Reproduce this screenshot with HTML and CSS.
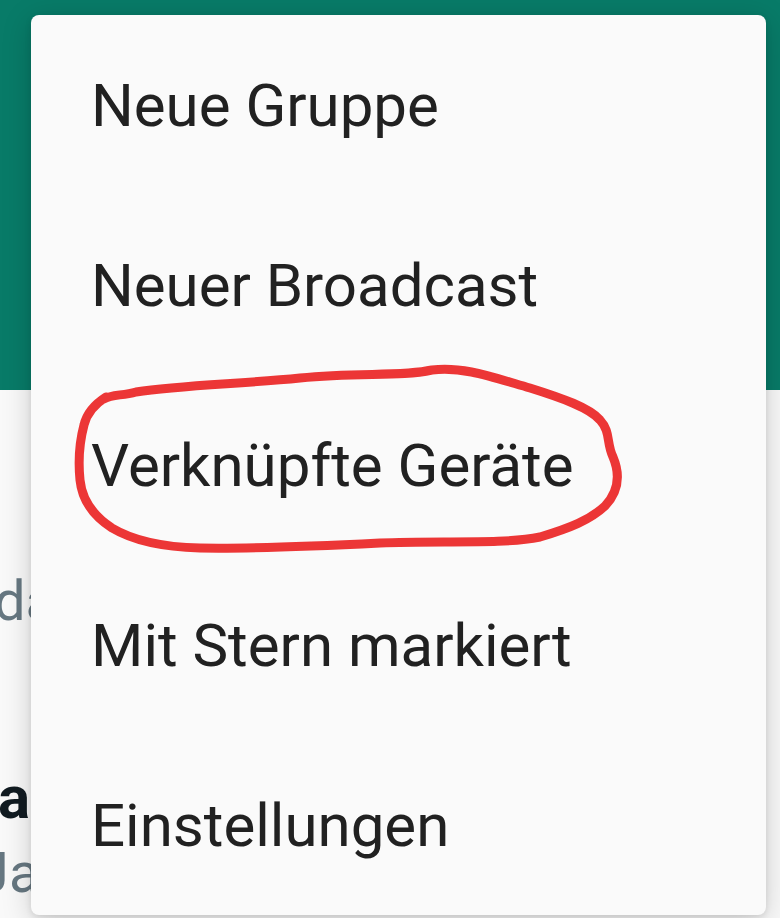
FILE: index.html
```html
<!DOCTYPE html>
<html lang="de">
<head>
<meta charset="utf-8">
<title>Menü</title>
<link rel="stylesheet" href="styles.css">
</head>
<body>
<div class="app">
  <header class="topbar"></header>
  <main class="list">
    <div class="line preview first">da</div>
    <div class="line name">ac</div>
    <div class="line preview third">Ja</div>
  </main>

  <nav class="menu">
    <div class="item">Neue Gruppe</div>
    <div class="item">Neuer Broadcast</div>
    <div class="item">Verknüpfte Geräte</div>
    <div class="item">Mit Stern markiert</div>
    <div class="item">Einstellungen</div>
  </nav>

  <svg class="mark" width="780" height="918" viewBox="0 0 780 918" aria-hidden="true">
    <path d="M104,399 C112,394 122,396 136,392 C180,385 240,384 300,378 C360,372 400,377 432,370 C462,366 492,377 530,388 C562,398 590,408 600,420 C611,432 606,442 613,457 C621,476 618,492 605,506 C590,520 570,528 540,537 C500,545 440,540 380,543 C320,546 260,549 200,548 C160,547 132,540 112,528 C92,515 82,500 80,480 C78,460 80,440 84,425 C87,412 95,404 106,397"
      fill="none" stroke="#ec3636" stroke-width="9" stroke-linecap="round" stroke-linejoin="round"/>
  </svg>
</div>
</body>
</html>
```

FILE: styles.css
```css
* { box-sizing: border-box; }
html, body { margin: 0; padding: 0; }
body {
  background: #ffffff;
  font-family: Roboto, "Noto Sans", "Liberation Sans", sans-serif;
}
.app {
  position: relative;
  width: 780px;
  height: 918px;
  overflow: hidden;
  background: #f9f9f9;
}
.topbar {
  height: 390px;
  background: #087b68;
}
.list {
  padding-top: 178px;
}
.line {
  font-size: 56px;
  line-height: 66px;
  white-space: nowrap;
}
.preview { color: #667781; }
.first { margin-left: -6px; }
.name {
  margin-top: 131px;
  font-weight: 700;
  font-size: 60px;
  color: #111b21;
  margin-left: -2px;
}
.third {
  margin-top: 9px;
  margin-left: -22px;
}
.menu {
  position: absolute;
  top: 15px;
  left: 31px;
  width: 735px;
  background: #fafafa;
  border-radius: 8px;
  box-shadow: 0 2px 6px rgba(0,0,0,0.10), 0 6px 30px rgba(0,0,0,0.18);
  display: flex;
  flex-direction: column;
}
.item {
  height: 180px;
  display: flex;
  align-items: center;
  padding-left: 60px;
  font-size: 60px;
  color: #212121;
}
.mark {
  position: absolute;
  top: 0;
  left: 0;
  pointer-events: none;
}
```
